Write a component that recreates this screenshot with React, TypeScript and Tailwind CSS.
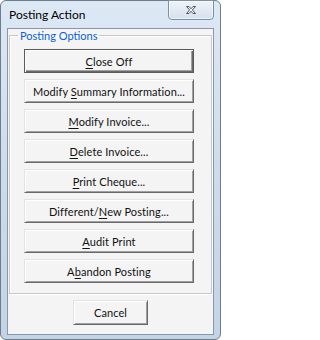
import type { ReactNode } from "react";

const FONT = { fontFamily: 'Lato, "Noto Sans", "DejaVu Sans", sans-serif' };

function Key({ children }: { children: ReactNode }) {
  return <span className="underline underline-offset-[2px]">{children}</span>;
}

function WinButton({
  children,
  isDefault = false,
  className = "",
}: {
  children: ReactNode;
  isDefault?: boolean;
  className?: string;
}) {
  const bevel = isDefault
    ? "border border-[#5a5a5a] shadow-[inset_1px_1px_0_#ffffff,inset_-1px_-1px_0_#696969,inset_-2px_-2px_0_#a0a0a0]"
    : "border border-t-[#e3e3e3] border-l-[#e3e3e3] border-r-[#696969] border-b-[#696969] shadow-[inset_1px_1px_0_#ffffff,inset_-1px_-1px_0_#a0a0a0]";
  return (
    <button
      type="button"
      className={`flex h-[24px] items-center justify-center bg-[#f4f4f4] text-[#111] ${bevel} ${className}`}
    >
      <span className="whitespace-nowrap text-[11px] leading-none tracking-[0.1px]">{children}</span>
    </button>
  );
}

function CloseGlyph() {
  return (
    <svg width="12" height="10" viewBox="0 0 12 10">
      <path
        d="M1.5 1.5 H4 L6 3.8 L8 1.5 H10.5 L7.4 5 L10.5 8.5 H8 L6 6.2 L4 8.5 H1.5 L4.6 5 Z"
        fill="#ffffff"
        stroke="#4a5566"
        strokeWidth="1"
        strokeLinejoin="round"
      />
    </svg>
  );
}

export default function App() {
  const options: { key: string; label: ReactNode; isDefault?: boolean }[] = [
    { key: "close", label: <><Key>C</Key>lose Off</>, isDefault: true },
    { key: "summary", label: <>Modify <Key>S</Key>ummary Information...</> },
    { key: "modify", label: <><Key>M</Key>odify Invoice...</> },
    { key: "delete", label: <><Key>D</Key>elete Invoice...</> },
    { key: "print", label: <><Key>P</Key>rint Cheque...</> },
    { key: "different", label: <>Different/<Key>N</Key>ew Posting...</> },
    { key: "audit", label: <><Key>A</Key>udit Print</> },
    { key: "abandon", label: <>A<Key>b</Key>andon Posting</> },
  ];

  return (
    <div style={FONT} className="h-[340px] w-[221px] bg-white">
      <div className="flex h-[340px] w-[221px] flex-col rounded-[6px] border border-[#6e7c8c] bg-gradient-to-b from-[#dde8f5] via-[#cddcec] to-[#c3d4e7]">
        {/* title bar */}
        <div className="flex h-[27px] items-start justify-between">
          <span className="pl-[8px] pt-[6px] text-[12px] leading-[15px] text-black">Posting Action</span>
          <div className="mr-[6px] -mt-px flex h-[20px] w-[46px] items-center justify-center rounded-b-[4px] border border-[#8090a3] bg-gradient-to-b from-[#eef3f9] to-[#d5e1ee] shadow-[inset_0_0_0_1px_rgba(255,255,255,0.6)]">
            <CloseGlyph />
          </div>
        </div>

        {/* client area */}
        <div className="mx-[6px] flex flex-1 flex-col border border-[#8a97a6] bg-[#f4f4f4]">
          <fieldset className="ml-px mr-px border border-[#c4c9cd] pb-[10px] shadow-[inset_1px_1px_0_#ffffff,1px_1px_0_#ffffff]">
            <legend className="ml-[8px] px-[2px] text-[11px] leading-[13px] text-[#0a5fd9]">Posting Options</legend>
            <div className="mt-[7px] flex flex-col gap-[6px] pl-[14px] pr-[17px]">
              {options.map((o) => (
                <WinButton key={o.key} isDefault={o.isDefault}>
                  {o.label}
                </WinButton>
              ))}
            </div>
          </fieldset>
          <div className="flex justify-center pt-[6px]">
            <WinButton className="h-[25px] w-[75px]">Cancel</WinButton>
          </div>
        </div>
        <div className="h-[4px]" />
      </div>
    </div>
  );
}
